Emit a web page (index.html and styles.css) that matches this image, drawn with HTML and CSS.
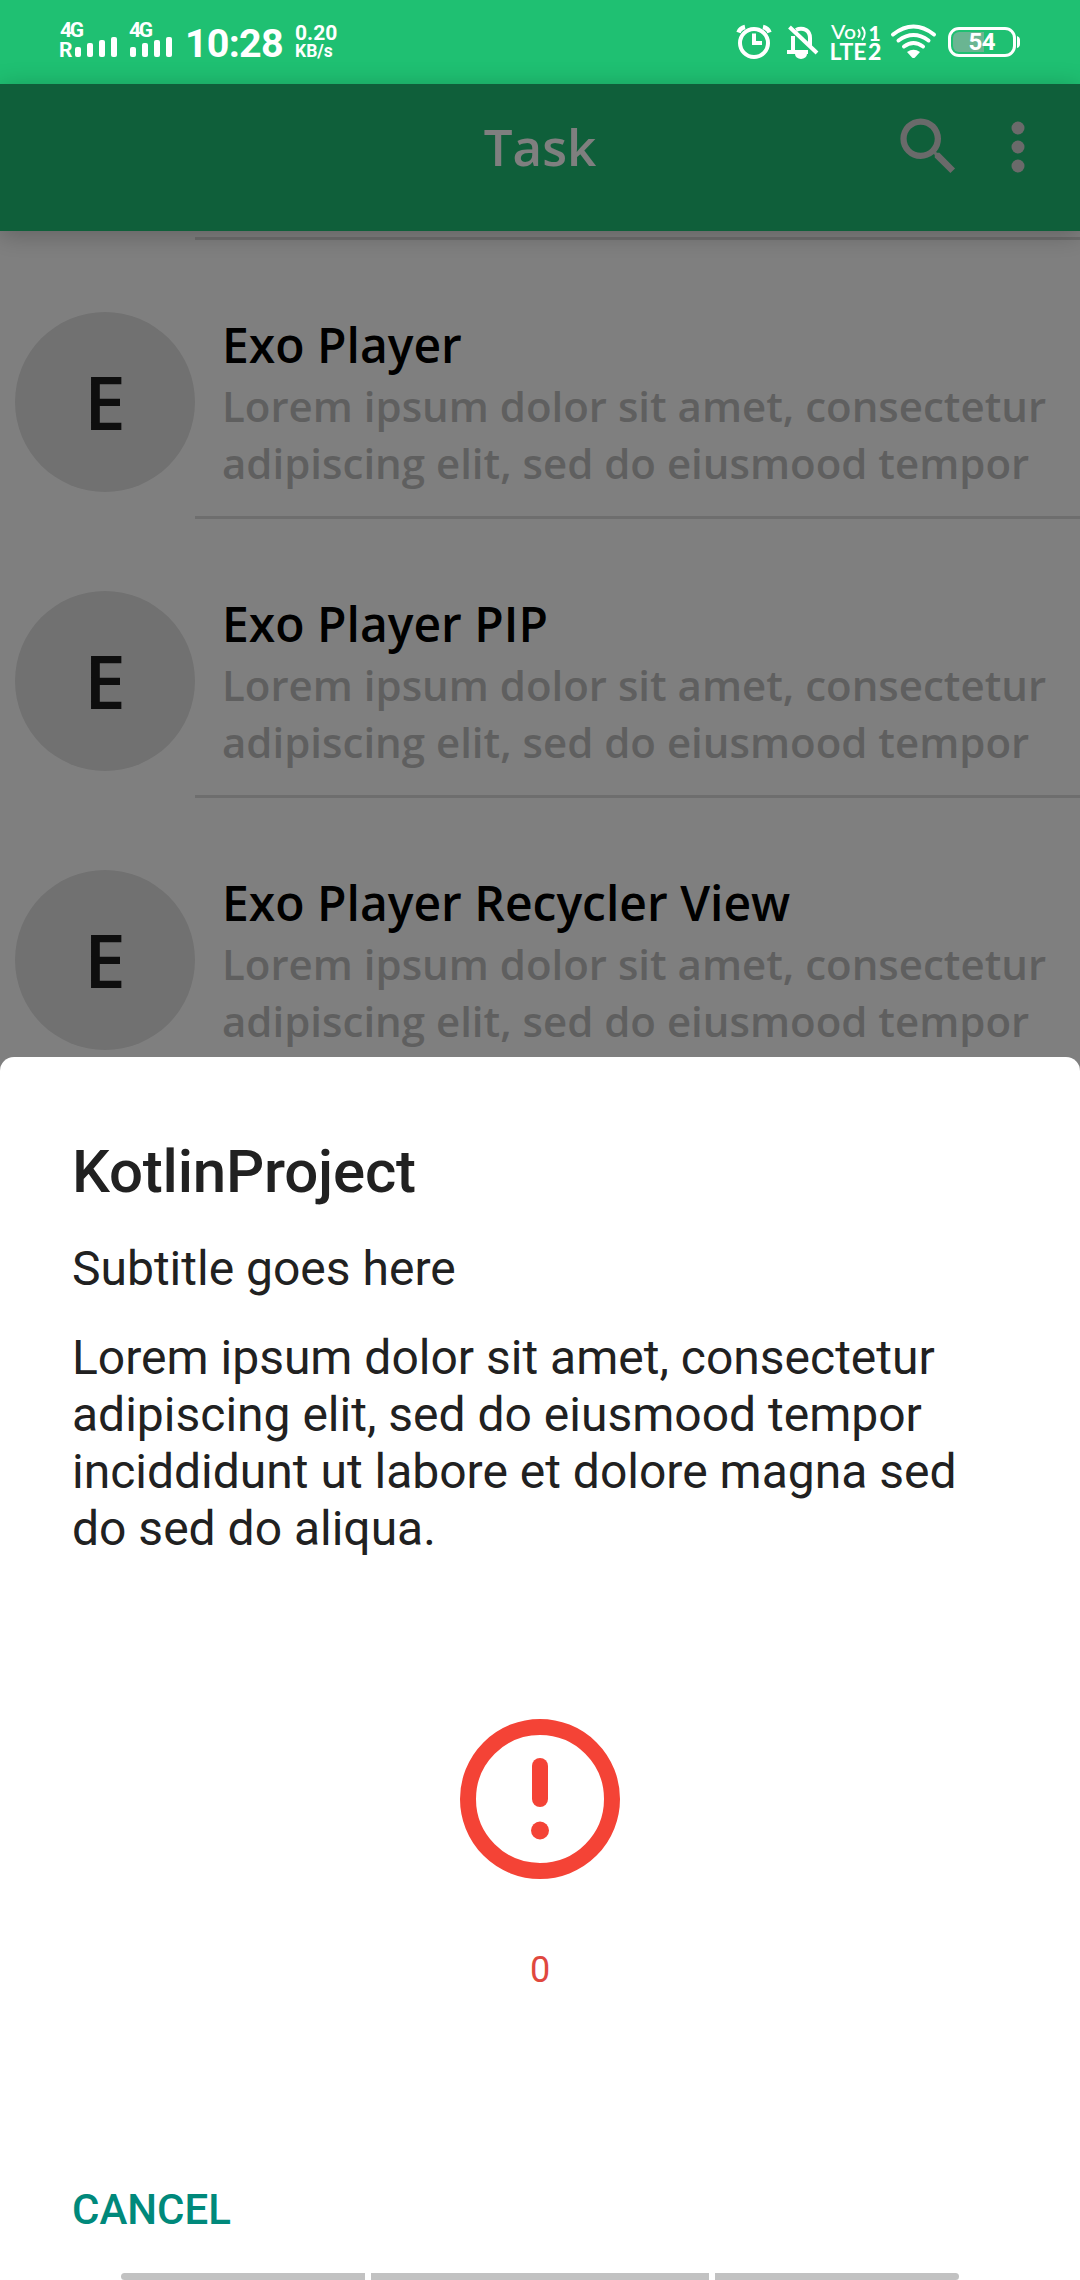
FILE: index.html
```html
<!DOCTYPE html>
<html lang="en">
<head>
<meta charset="utf-8">
<title>Task</title>
<link rel="stylesheet" href="styles.css">
</head>
<body>
<div class="screen">
  <header class="status">
    <svg class="signals" width="125" height="54" viewBox="-5 -8 125 54">
      <g class="signal-text"><text x="0" y="17" textLength="24">4G</text><text x="-1" y="37">R</text><text x="69" y="17" textLength="24">4G</text></g>
      <g fill="#fff">
        <rect x="15" y="27" width="6" height="10" rx="2"/><rect x="27" y="23" width="6" height="14" rx="2"/><rect x="39" y="20" width="6" height="17" rx="2"/><rect x="51" y="17" width="6" height="20" rx="2"/>
        <rect x="70" y="27" width="6" height="10" rx="2"/><rect x="82" y="23" width="6" height="14" rx="2"/><rect x="94" y="20" width="6" height="17" rx="2"/><rect x="106" y="17" width="6" height="20" rx="2"/>
      </g>
    </svg>
    <span class="clock">10:28</span>
    <span class="speed"><span class="rate">0.20</span><span class="unit">KB/s</span></span>
    <svg class="status-icons" width="290" height="60" viewBox="734 12 290 60">
      <g fill="none" stroke="#fff" stroke-width="4">
        <circle cx="754" cy="43" r="14"/>
        <path d="M754 33.500V43h8"/>
        <path d="M738.500 32.500Q740 28 745 27M763 27Q768 28 769.500 32.500" stroke-width="4.500"/>
        <path d="M793 52V36M796 30q5-2.500 10 0 4 2.500 4 8v9M787 52h21"/>
        <path d="M789.500 27L817 53"/>
      </g>
      <path d="M795 54h12a6 5 0 0 1-12 0z" fill="#fff"/>
      <g fill="#fff" class="volte">
        <text x="831" y="39" font-size="19" font-weight="500" textLength="25" lengthAdjust="spacingAndGlyphs">Vo</text>
        <text x="868.500" y="41" font-size="21" font-weight="900">1</text>
        <text x="829.500" y="60" font-size="23" font-weight="700" textLength="37" lengthAdjust="spacingAndGlyphs">LTE</text>
        <text x="868" y="60" font-size="23" font-weight="900">2</text>
      </g>
      <g fill="none" stroke="#fff" stroke-width="2"><path d="M858 29.500q3.500 4 0 8M862 27q5.500 6.500 0 13"/></g>
      <g fill="none" stroke="#fff" stroke-width="4" stroke-linecap="round">
        <path d="M893 34.500q20.500-16 41 0M898.500 40.500q15-11 30 0M904 46.500q9.500-7 19 0"/>
      </g>
      <path d="M907 52q6.500-4.500 13 0l-5 5.500q-1.500 1.200-3 0z" fill="#fff"/>
      <rect x="949.500" y="28.500" width="65" height="27" rx="9.500" fill="none" stroke="#fff" stroke-width="3"/>
      <path d="M984 32v20h-25a6 6 0 0 1-6-6v-8a6 6 0 0 1 6-6z" fill="#6ab592"/>
      <path d="M1017 36q3 1 3 4v4q0 3-3 4z" fill="#fff"/>
      <text x="968.500" y="50" class="charge" textLength="27">54</text>
    </svg>
  </header>

  <main class="page">
    <div class="toolbar">
      <h1 class="toolbar-title">Task</h1>
      <svg class="search" width="75" height="75" viewBox="0 0 24 24"><path fill="#d4d4d4" d="M15.500 14h-.790l-.280-.270A6.471 6.471 0 0 0 16 9.500 6.500 6.500 0 1 0 9.500 16c1.610 0 3.090-.590 4.230-1.570l.270.280v.790l5 4.990L20.490 19l-4.990-5zm-6 0C7.010 14 5 11.990 5 9.500S7.010 5 9.500 5 14 7.010 14 9.500 11.990 14 9.500 14z"/></svg>
      <svg class="more" width="14" height="52" viewBox="0 0 14 52"><g fill="#d4d4d4"><circle cx="7" cy="7" r="6.500"/><circle cx="7" cy="26" r="6.500"/><circle cx="7" cy="45" r="6.500"/></g></svg>
    </div>
    <div class="list">
      <div class="divider"></div>
      <article class="item"><div class="avatar">E</div><div class="copy"><h2>Exo Player</h2><p>Lorem ipsum dolor sit amet, consectetur<br>adipiscing elit, sed do eiusmood tempor</p></div></article>
      <div class="divider"></div>
      <article class="item"><div class="avatar">E</div><div class="copy"><h2>Exo Player PIP</h2><p>Lorem ipsum dolor sit amet, consectetur<br>adipiscing elit, sed do eiusmood tempor</p></div></article>
      <div class="divider"></div>
      <article class="item"><div class="avatar">E</div><div class="copy"><h2>Exo Player Recycler View</h2><p>Lorem ipsum dolor sit amet, consectetur<br>adipiscing elit, sed do eiusmood tempor</p></div></article>
    </div>
    <div class="scrim"></div>
    <section class="sheet">
      <h2 class="sheet-title">KotlinProject</h2>
      <p class="sheet-subtitle">Subtitle goes here</p>
      <p class="sheet-body">Lorem ipsum dolor sit amet, consectetur<br>adipiscing elit, sed do eiusmood tempor<br>inciddidunt ut labore et dolore magna sed<br>do sed do aliqua.</p>
      <svg class="alert" width="160" height="160" viewBox="0 0 160 160"><circle cx="80" cy="80" r="72" fill="none" stroke="#f44336" stroke-width="16"/><rect x="72" y="39" width="16" height="49" rx="8" fill="#f44336"/><circle cx="80" cy="111.500" r="9" fill="#f44336"/></svg>
      <p class="count">0</p>
      <button class="cancel">CANCEL</button>
      <div class="navbar"><span></span><span></span><span></span></div>
    </section>
  </main>
</div>
</body>
</html>
```
FILE: styles.css
```css
* { box-sizing: border-box; margin: 0; padding: 0; }
body { background: #fff; font-family: Roboto, "Liberation Sans", sans-serif; }
.screen { width: 1080px; height: 2280px; display: flex; flex-direction: column; overflow: hidden; }

.status { position: relative; z-index: 1; height: 84px; background: #1fc072; color: #fff; display: flex; align-items: flex-start; padding: 12px 56px 0 55px; }
.signals { display: block; }
.signal-text { fill: #fff; font-size: 21px; font-weight: 700; }
.clock { width: 110px; margin: 8px 0 0 5px; font-size: 39.500px; line-height: 48px; font-weight: 700; letter-spacing: -.8px; white-space: nowrap; }
.speed { display: flex; flex-direction: column; font-weight: 700; padding-top: 11px; }
.rate { font-size: 21px; line-height: 20px; }
.unit { font-size: 17.500px; line-height: 17px; }
.status-icons { margin: 0 0 0 auto; display: block; }
.volte { font-family: Lato, sans-serif; }
.charge { fill: #fff; font-size: 24px; font-weight: 700; }

.page { position: relative; flex: 1; display: flex; flex-direction: column; font-family: "Open Sans", "Noto Sans", sans-serif; }
.toolbar { height: 147px; background: #1fbf74; display: grid; grid-template-columns: 1fr auto 1fr; z-index: 1; box-shadow: 0 4px 24px rgba(0, 0, 0, .24); }
.toolbar-title { grid-column: 2; color: #fff; font-size: 51px; line-height: 70px; font-weight: 600; padding-top: 27px; }
.search { grid-column: 3; grid-row: 1; justify-self: end; margin: 25px 114px 0 0; }
.more { grid-column: 3; grid-row: 1; justify-self: end; margin: 37px 55px 0 0; }

.list { padding-top: 6px; }
.divider { height: 3px; margin-left: 195px; background: #dcdcdc; }
.item { height: 276px; display: flex; gap: 27px; padding: 72px 0 0 15px; }
.avatar { width: 180px; height: 180px; flex: none; border-radius: 50%; background: #e2e2e2; color: #1c1c1c; display: flex; align-items: center; justify-content: center; font-size: 75px; font-weight: 600; padding-bottom: 3px; }
.copy { white-space: nowrap; }
.copy h2 { font-size: 48px; line-height: 65px; font-weight: 600; color: #000; }
.copy p { font-size: 42px; line-height: 57px; font-weight: 600; color: #bebebe; }

.scrim { position: absolute; inset: 0; background: rgba(0, 0, 0, .5); z-index: 2; }
.sheet { position: absolute; left: 0; right: 0; top: 973px; bottom: 0; z-index: 3; background: #fff; border-radius: 14px 14px 0 0; padding: 80px 72px 0; display: flex; flex-direction: column; font-family: Roboto, "Liberation Sans", sans-serif; color: #212121; white-space: nowrap; }
.sheet-title { font-size: 60px; line-height: 70px; font-weight: 500; letter-spacing: -.2px; }
.sheet-subtitle { font-size: 48px; line-height: 57px; margin-top: 33px; }
.sheet-body { font-size: 48px; line-height: 57px; margin-top: 32px; }
.alert { margin: 162px auto 0; display: block; }
.count { text-align: center; font-size: 36px; line-height: 42px; margin-top: 70px; color: #e0483e; }
.cancel { align-self: flex-start; border: 0; background: none; color: #00897b; font: 500 42px/50px Roboto, sans-serif; margin-top: 194px; }
.navbar { display: flex; gap: 6px; margin: auto 49px 0; height: 7px; }
.navbar span { flex: 244; background: #c2c2c2; }
.navbar span:nth-child(2) { flex: 338; }
.navbar span:first-child { border-radius: 4px 0 0 4px; }
.navbar span:last-child { border-radius: 0 4px 4px 0; }
```
